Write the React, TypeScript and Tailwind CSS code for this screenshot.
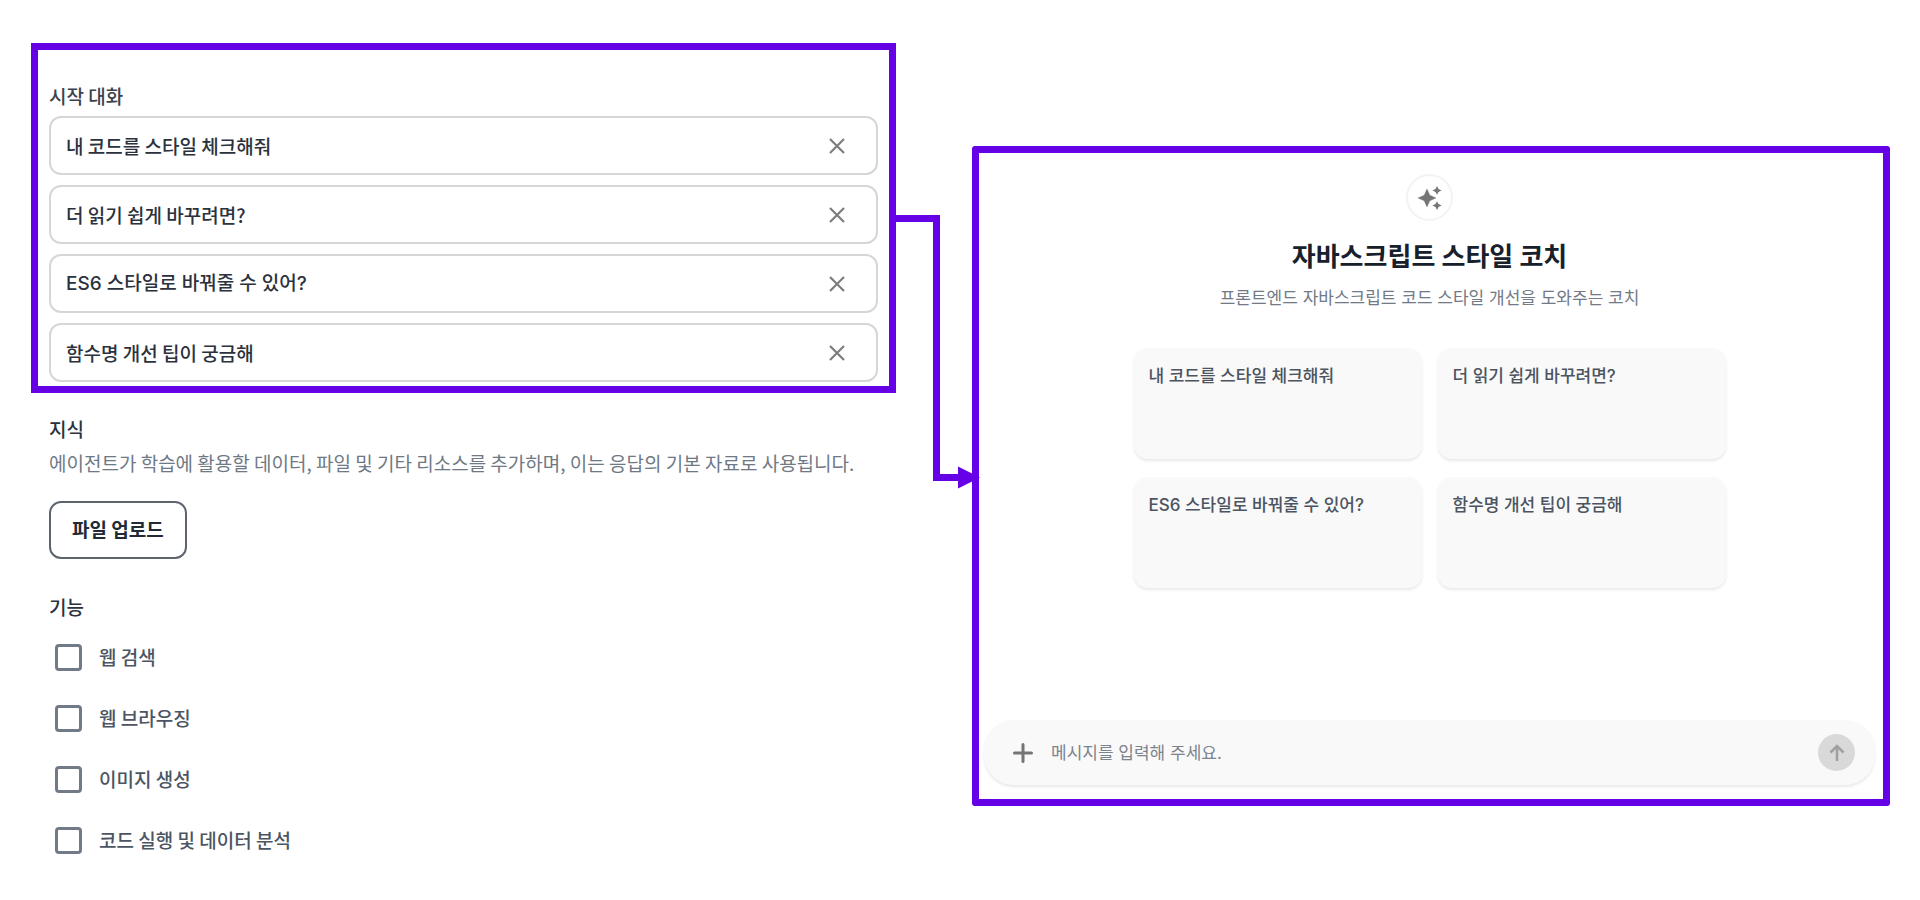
import { useState } from "react";

const STARTERS = [
  { text: "내 코드를 스타일 체크해줘", font: "font-['Noto_Sans_CJK_KR',sans-serif]" },
  { text: "더 읽기 쉽게 바꾸려면?", font: "font-['Noto_Sans_CJK_KR',sans-serif]" },
  { text: "ES6 스타일로 바꿔줄 수 있어?", font: "font-['Inter','Noto_Sans_CJK_KR',sans-serif]" },
  { text: "함수명 개선 팁이 궁금해", font: "font-['Noto_Sans_CJK_KR',sans-serif]" },
];

const FEATURES = ["웹 검색", "웹 브라우징", "이미지 생성", "코드 실행 및 데이터 분석"];

const CloseIcon = () => (
  <svg width="16" height="16" viewBox="0 0 16 16" fill="none" aria-hidden="true">
    <path d="M1 1l14 14M15 1L1 15" stroke="#7d7d7d" strokeWidth="2.2" />
  </svg>
);

const SparkleIcon = () => (
  <svg width="24" height="24" viewBox="0 0 24 24" fill="#757575" aria-hidden="true">
    <path d="M9 3L11.8 9.2L18 12L11.8 14.8L9 21L6.2 14.8L0 12L6.2 9.2Z" stroke="#757575" strokeWidth="0.4" />
    <path d="M19 0L20.5 2.9L23.6 4.4L20.5 5.9L19 8.8L17.5 5.9L14.4 4.4L17.5 2.9Z" />
    <path d="M19 15.2L20.5 18.1L23.6 19.6L20.5 21.1L19 24L17.5 21.1L14.4 19.6L17.5 18.1Z" />
  </svg>
);

const StarterList = () => {
  const [values, setValues] = useState(STARTERS.map((item) => item.text));

  const handleChange = (index: number, value: string) => {
    setValues(values.map((item, i) => (i === index ? value : item)));
  };

  return (
    <section
      aria-labelledby="starter-title"
      className="border-[7px] border-[#6600e6] px-[11px] pt-8 pb-1"
    >
      <h2 id="starter-title" className="text-[19px] leading-7 font-medium text-[#3a424d]">
        시작 대화
      </h2>
      <div className="mt-[6px] flex flex-col gap-[10px]">
        {values.map((value, index) => (
          <div
            key={index}
            className="flex h-[59px] items-center rounded-xl border-2 border-[#d6d6d6] pr-[31px] pl-[15px]"
          >
            <input
              type="text"
              value={value}
              onChange={(event) => handleChange(index, event.target.value)}
              aria-label={`시작 대화 ${index + 1}`}
              className={`min-w-0 flex-1 bg-transparent text-[19px] leading-7 font-medium text-[#2b323d] outline-none ${STARTERS[index].font}`}
            />
            <button type="button" aria-label="삭제" onClick={() => handleChange(index, "")}>
              <CloseIcon />
            </button>
          </div>
        ))}
      </div>
    </section>
  );
};

const AgentSettings = () => (
  <div className="flex min-w-0 flex-[865] flex-col pt-[43px]">
    <StarterList />

    <section className="mt-[22px] pl-[18px]">
      <h2 className="text-[19px] leading-7 font-medium text-[#2b323d]">지식</h2>
      <p className="mt-1 text-[19px] leading-8 text-[#6f7985]">
        에이전트가 학습에 활용할 데이터, 파일 및 기타 리소스를 추가하며, 이는 응답의 기본 자료로 사용됩니다.
      </p>
      <button
        type="button"
        className="mt-[22px] h-[58px] rounded-xl border-2 border-[#5d646d] px-[21px] pb-[2px] text-[19px] leading-7 font-bold text-[#222a36]"
      >
        파일 업로드
      </button>
    </section>

    <section className="mt-[34px] pl-[18px]">
      <h2 className="text-[19px] leading-7 font-medium text-[#2b323d]">기능</h2>
      <ul className="mt-[22px] flex flex-col gap-[33px] pl-[6px]">
        {FEATURES.map((feature) => (
          <li key={feature}>
            <label className="flex w-fit items-center gap-[17px] text-[19px] leading-7 font-medium text-[#4b5563]">
              <input
                type="checkbox"
                className="size-[27px] appearance-none rounded-sm border-[3px] border-[#717a86] checked:bg-[#717a86]"
              />
              {feature}
            </label>
          </li>
        ))}
      </ul>
    </section>
  </div>
);

const Connector = () => (
  <svg
    width="76"
    height="500"
    viewBox="0 0 76 500"
    className="shrink-0 overflow-visible"
    aria-hidden="true"
  >
    <path d="M0 218.5H40.5V477.5H66" fill="none" stroke="#6600e6" strokeWidth="7" />
    <path d="M62 466.5L84 477.5L62 488.5Z" fill="#6600e6" />
  </svg>
);

const ChatPreview = () => (
  <div className="min-w-0 flex-[918] pt-[146px]">
    <section className="flex flex-col items-center rounded-[3px] border-[7px] border-[#6600e6] pt-[21px] pr-2 pb-[14px] pl-[5px] font-['Inter','Noto_Sans_CJK_KR',sans-serif]">
      <div className="flex size-[47px] items-center justify-center rounded-full border-2 border-[#f3f3f3]">
        <SparkleIcon />
      </div>
      <h1 className="mt-[18px] text-[26px] leading-9 font-bold text-[#17202b]">
        자바스크립트 스타일 코치
      </h1>
      <p className="mt-[7px] text-[17px] leading-8 text-[#717a86]">
        프론트엔드 자바스크립트 코드 스타일 개선을 도와주는 코치
      </p>

      <div className="mt-[34px] grid w-full max-w-[592px] grid-cols-2 gap-x-4 gap-y-[18px]">
        {STARTERS.map((item) => (
          <button
            key={item.text}
            type="button"
            className="flex h-[111px] items-start rounded-[14px] bg-[#f9f9f9] px-[15px] pt-[14px] text-left text-[17px] leading-7 font-medium text-[#4b5460] shadow-[0_2px_3px_rgba(0,0,0,0.09)]"
          >
            {item.text}
          </button>
        ))}
      </div>

      <form
        onSubmit={(event) => event.preventDefault()}
        className="mt-[132px] flex h-[65px] w-full items-center rounded-[30px] bg-[#f9f9f9] pr-5 pl-[29px] shadow-[0_2px_3px_rgba(0,0,0,0.09)]"
      >
        <button type="button" aria-label="파일 추가">
          <svg width="20" height="20" viewBox="0 0 20 20" fill="none" aria-hidden="true">
            <path d="M10 1.5V18.5M1.5 10H18.5" stroke="#757575" strokeWidth="3" strokeLinecap="round" />
          </svg>
        </button>
        <input
          type="text"
          aria-label="메시지"
          placeholder="메시지를 입력해 주세요."
          className="ml-[18px] min-w-0 flex-1 bg-transparent text-[17px] leading-7 outline-none placeholder:text-[#7b838e]"
        />
        <button
          type="submit"
          aria-label="보내기"
          className="flex size-[37px] items-center justify-center rounded-full bg-[#d9d9d9]"
        >
          <svg width="16" height="18" viewBox="0 0 16 18" fill="none" aria-hidden="true">
            <path d="M8 17V2M1.5 8.5L8 2L14.5 8.5" stroke="#a0a0a0" strokeWidth="2.6" />
          </svg>
        </button>
      </form>
    </section>
  </div>
);

export default function App() {
  return (
    <main className="flex min-h-screen items-start bg-white pr-[30px] pl-[31px] font-['Noto_Sans_CJK_KR',sans-serif]">
      <AgentSettings />
      <Connector />
      <ChatPreview />
    </main>
  );
}
